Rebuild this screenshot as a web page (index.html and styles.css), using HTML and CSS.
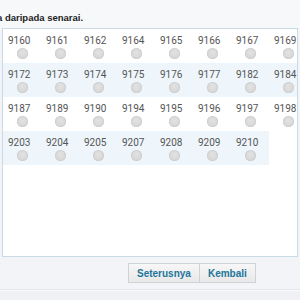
FILE: index.html
```html
<!DOCTYPE html>
<html>
<head>
<meta charset="utf-8">
<link rel="stylesheet" href="styles.css">
</head>
<body>
<div class="page">
  <p class="intro">a daripada senarai.</p>
  <div class="box">
    <div class="grid">
      <label class="cell"><span class="num">9160</span><span class="dot"></span></label>
      <label class="cell"><span class="num">9161</span><span class="dot"></span></label>
      <label class="cell"><span class="num">9162</span><span class="dot"></span></label>
      <label class="cell"><span class="num">9164</span><span class="dot"></span></label>
      <label class="cell"><span class="num">9165</span><span class="dot"></span></label>
      <label class="cell"><span class="num">9166</span><span class="dot"></span></label>
      <label class="cell"><span class="num">9167</span><span class="dot"></span></label>
      <label class="cell"><span class="num">9169</span><span class="dot"></span></label>
      <label class="cell alt"><span class="num">9172</span><span class="dot"></span></label>
      <label class="cell alt"><span class="num">9173</span><span class="dot"></span></label>
      <label class="cell alt"><span class="num">9174</span><span class="dot"></span></label>
      <label class="cell alt"><span class="num">9175</span><span class="dot"></span></label>
      <label class="cell alt"><span class="num">9176</span><span class="dot"></span></label>
      <label class="cell alt"><span class="num">9177</span><span class="dot"></span></label>
      <label class="cell alt"><span class="num">9182</span><span class="dot"></span></label>
      <label class="cell alt"><span class="num">9184</span><span class="dot"></span></label>
      <label class="cell"><span class="num">9187</span><span class="dot"></span></label>
      <label class="cell"><span class="num">9189</span><span class="dot"></span></label>
      <label class="cell"><span class="num">9190</span><span class="dot"></span></label>
      <label class="cell"><span class="num">9194</span><span class="dot"></span></label>
      <label class="cell"><span class="num">9195</span><span class="dot"></span></label>
      <label class="cell"><span class="num">9196</span><span class="dot"></span></label>
      <label class="cell"><span class="num">9197</span><span class="dot"></span></label>
      <label class="cell"><span class="num">9198</span><span class="dot"></span></label>
      <label class="cell alt"><span class="num">9203</span><span class="dot"></span></label>
      <label class="cell alt"><span class="num">9204</span><span class="dot"></span></label>
      <label class="cell alt"><span class="num">9205</span><span class="dot"></span></label>
      <label class="cell alt"><span class="num">9207</span><span class="dot"></span></label>
      <label class="cell alt"><span class="num">9208</span><span class="dot"></span></label>
      <label class="cell alt"><span class="num">9209</span><span class="dot"></span></label>
      <label class="cell alt"><span class="num">9210</span><span class="dot"></span></label>
    </div>
  </div>
  <div class="actions">
    <button class="btn">Seterusnya</button><button class="btn">Kembali</button>
  </div>
  <div class="footer"></div>
</div>
</body>
</html>
```
FILE: styles.css
```css
html, body {
  margin: 0;
  padding: 0;
}
body {
  background: #f3f4f7;
  font-family: Roboto, "Liberation Sans", sans-serif;
  width: 300px;
  height: 300px;
  overflow: hidden;
}
.page {
  display: flex;
  flex-direction: column;
}
.intro {
  margin: 0 0 0 -3px;
  height: 28px;
  box-sizing: border-box;
  padding-top: 12px;
  font-family: "Liberation Sans", Arial, sans-serif;
  font-weight: bold;
  font-size: 9.5px;
  line-height: 11px;
  color: #222;
  background: #f7f8fa;
  white-space: nowrap;
}
.box {
  margin-left: 2px;
  width: 296px;
  height: 229px;
  box-sizing: border-box;
  border: 1px solid #c9dbe6;
  background: #fff;
  overflow: hidden;
}
.grid {
  display: grid;
  grid-template-columns: repeat(8, 38px);
  grid-auto-rows: 34px;
  width: 304px;
}
.cell {
  display: flex;
  flex-direction: column;
  padding: 6px 0 0 5px;
  box-sizing: border-box;
}
.cell.alt {
  background: #eef6fb;
}
.num {
  font-size: 10px;
  line-height: 12px;
  color: #555;
}
.dot {
  width: 11px;
  height: 11px;
  margin: 1px 0 0 9px;
  border-radius: 50%;
  background: radial-gradient(circle at 50% 40%, #e2e2e2, #d2d2d2);
  box-shadow: inset 0 0 0 1px #d0d0d0;
}
.actions {
  display: flex;
  padding: 6px 0 0 128px;
  height: 33px;
  box-sizing: border-box;
  border-bottom: 1px solid #e4e6ea;
}
.btn {
  height: 20px;
  padding: 0 8px;
  margin: 0;
  border: 1px solid #cfd2d6;
  background: linear-gradient(#f7f7f7, #e8e8e8);
  font-family: "Liberation Sans", Arial, sans-serif;
  font-weight: bold;
  font-size: 10px;
  color: #21759b;
}
.btn + .btn {
  border-left: none;
}
.footer {
  height: 20px;
  background: #f0f1f4;
  border-top: 1px solid #fafbfc;
}
```
